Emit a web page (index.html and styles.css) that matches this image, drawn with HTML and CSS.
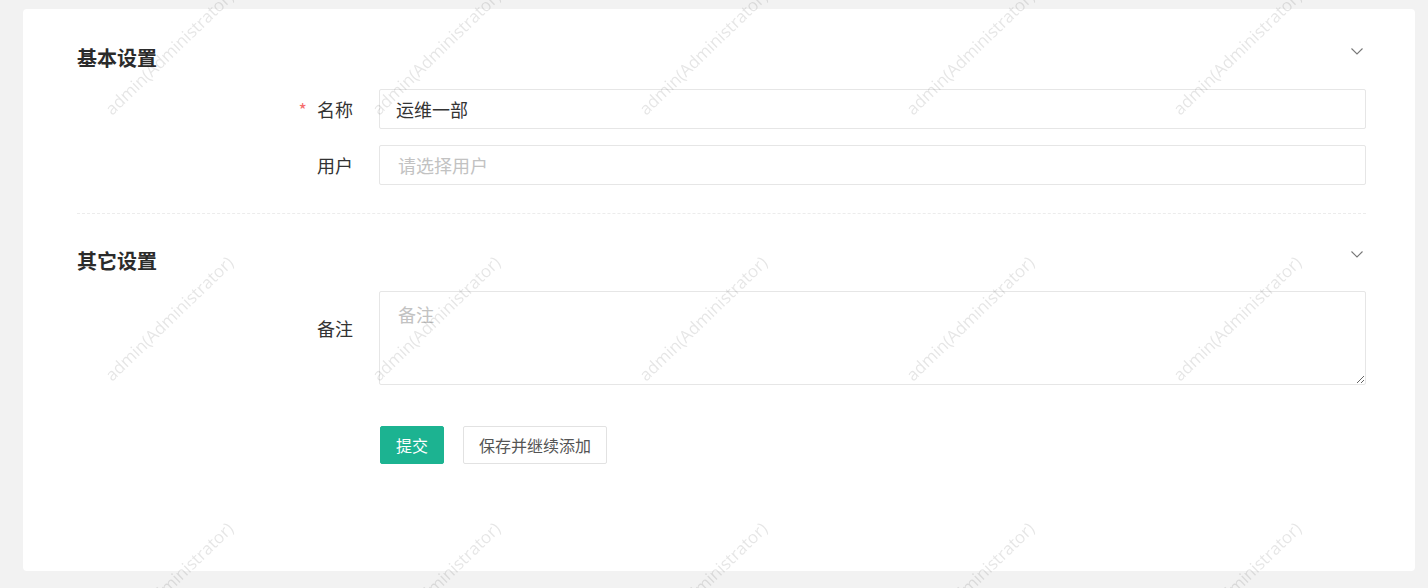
FILE: index.html
```html
<!DOCTYPE html>
<html lang="zh-CN">
<head>
  <meta charset="UTF-8">
  <meta name="viewport" content="width=device-width, initial-scale=1.0">
  <title>部门编辑</title>
  <link rel="stylesheet" href="styles.css">
</head>
<body>
  <div class="card">
    <form class="form">
      <div class="section">
        <div class="sec-head">
          <h2>基本设置</h2>
          <svg class="chevron" width="12" height="7" viewBox="0 0 12 7"><path d="M0.5 0.5 L6 6 L11.5 0.5" fill="none" stroke="#777" stroke-width="1.1"/></svg>
        </div>
        <div class="form-row first">
          <label class="form-label"><span class="req">*</span>名称</label>
          <input class="form-input" type="text" value="运维一部">
        </div>
        <div class="form-row">
          <label class="form-label">用户</label>
          <input class="form-input" type="text" placeholder="请选择用户">
        </div>
      </div>

      <div class="divider"></div>

      <div class="section">
        <div class="sec-head">
          <h2>其它设置</h2>
          <svg class="chevron" width="12" height="7" viewBox="0 0 12 7"><path d="M0.5 0.5 L6 6 L11.5 0.5" fill="none" stroke="#777" stroke-width="1.1"/></svg>
        </div>
        <div class="form-row first top">
          <label class="form-label">备注</label>
          <textarea class="form-textarea" placeholder="备注"></textarea>
        </div>
      </div>

      <div class="actions">
        <button type="button" class="btn btn-primary">提交</button>
        <button type="button" class="btn">保存并继续添加</button>
      </div>
    </form>
  </div>

  <div class="watermark">
    <span>admin(Administrator)</span><span>admin(Administrator)</span><span>admin(Administrator)</span><span>admin(Administrator)</span><span>admin(Administrator)</span>
    <span>admin(Administrator)</span><span>admin(Administrator)</span><span>admin(Administrator)</span><span>admin(Administrator)</span><span>admin(Administrator)</span>
    <span>admin(Administrator)</span><span>admin(Administrator)</span><span>admin(Administrator)</span><span>admin(Administrator)</span><span>admin(Administrator)</span>
  </div>
</body>
</html>
```

FILE: styles.css
```css
html, body {
  margin: 0;
  height: 100%;
  overflow: hidden;
}
body {
  background: #f2f2f2;
  font-family: "Noto Sans CJK SC", "Liberation Sans", sans-serif;
  color: #333;
}
.card {
  margin: 9px 13px 0 23px;
  height: 562px;
  box-sizing: border-box;
  background: #fff;
  border-radius: 4px;
  padding: 35px 49px 0 54px;
}
.sec-head {
  display: flex;
  justify-content: space-between;
  align-items: flex-start;
}
.sec-head h2 {
  margin: 0;
  font-size: 20px;
  line-height: 28px;
  font-weight: bold;
  color: #2b2b2b;
}
.chevron {
  margin-top: 4px;
  margin-right: 3px;
}
.form-row {
  display: flex;
  align-items: center;
  margin-top: 16px;
}
.form-row.first {
  margin-top: 17px;
}
.form-row.top {
  align-items: flex-start;
  margin-top: 16px;
}
.form-label {
  width: 302px;
  flex: none;
  box-sizing: border-box;
  padding-right: 26px;
  text-align: right;
  font-size: 18px;
  line-height: 24px;
  color: #333;
}
.form-row.top .form-label {
  padding-top: 25px;
}
.req {
  color: #f56c6c;
  margin-right: 10px;
}
.form-input, .form-textarea {
  flex: 1;
  box-sizing: border-box;
  border: 1px solid #e6e6e6;
  border-radius: 2px;
  font-family: inherit;
  font-size: 18px;
  color: #333;
  outline: none;
}
.form-input {
  height: 40px;
  padding: 0 16px;
}
.form-textarea {
  height: 94px;
  padding: 10px 18px;
  line-height: 24px;
  resize: vertical;
}
.form-input::placeholder, .form-textarea::placeholder {
  color: #c2c2c2;
}
.form-input::placeholder {
  padding-left: 2px;
}
.divider {
  margin-top: 28px;
  border-top: 1px dashed #ececec;
  margin-bottom: 33px;
}
.actions {
  display: flex;
  gap: 19px;
  margin-top: 41px;
  padding-left: 303px;
}
.btn {
  height: 38px;
  padding: 0 15px;
  border: 1px solid #e2e2e2;
  border-radius: 2px;
  background: #fff;
  color: #555;
  font-family: inherit;
  font-size: 16px;
  cursor: pointer;
}
.btn-primary {
  background: #1cb391;
  border-color: #1cb391;
  color: #fff;
}
.watermark {
  position: fixed;
  left: 35px;
  top: -81px;
  display: grid;
  grid-template-columns: repeat(5, 267px);
  grid-auto-rows: 266px;
  pointer-events: none;
}
.watermark span {
  display: flex;
  align-items: center;
  justify-content: center;
  transform: rotate(-44deg);
  font-family: "Open Sans", "Liberation Sans", sans-serif;
  font-size: 17px;
  color: rgba(0, 0, 0, 0.1);
  white-space: nowrap;
}
```
